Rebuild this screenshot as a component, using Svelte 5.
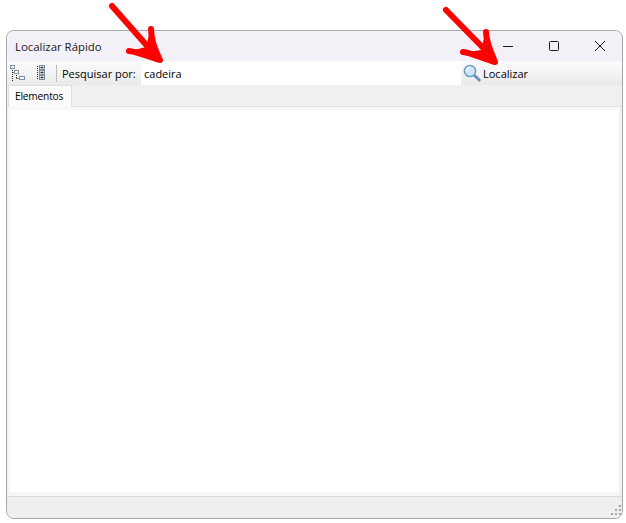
<script>
	const dots = [[12, 0], [8, 4], [12, 4], [4, 8], [8, 8], [12, 8]];
</script>

<div class="page">
	<div class="window">
		<header class="titlebar">
			<span class="title">Localizar Rápido</span>
			<div class="caption">
				<svg width="12" height="12" viewBox="0 0 12 12"><path d="M1 6.5h10" stroke="#1a1a1a" fill="none" /></svg>
				<svg width="12" height="12" viewBox="0 0 12 12"><rect x="1.5" y="1.5" width="9" height="9" rx="1" stroke="#1a1a1a" fill="none" /></svg>
				<svg width="12" height="12" viewBox="0 0 12 12"><path d="M1 1l10 10M11 1L1 11" stroke="#1a1a1a" fill="none" /></svg>
			</div>
		</header>

		<div class="toolbar">
			<button class="tool" aria-label="Expandir">
				<svg width="16" height="16" viewBox="0 0 16 16">
					<path d="M2.5 3v13M2.5 7.5h3M6.5 8v6M6.5 13.5h3" stroke="#222" stroke-dasharray="1 1" fill="none" />
					<rect x="0.5" y="0.5" width="4" height="3" fill="#fff" stroke="#7d93ad" />
					<rect x="4.5" y="5.5" width="4" height="3" fill="#fff" stroke="#7d93ad" />
					<rect x="9.5" y="11.5" width="5" height="3" fill="#fff" stroke="#7d93ad" />
				</svg>
			</button>
			<button class="tool second" aria-label="Recolher">
				<svg width="9" height="16" viewBox="0 0 9 16">
					<path d="M0.5 1v14" stroke="#222" stroke-dasharray="1 1" fill="none" />
					<rect x="2.5" y="0.5" width="5" height="4" fill="#e8edf3" stroke="#7d8da0" />
					<rect x="2.5" y="5.5" width="5" height="4" fill="#e8edf3" stroke="#7d8da0" />
					<rect x="2.5" y="10.5" width="5" height="4" fill="#e8edf3" stroke="#7d8da0" />
					<path d="M3.5 2.5h3M5 1.5v2M3.5 7.5h3M5 6.5v2M3.5 12.5h3M5 11.5v2" stroke="#333" fill="none" />
				</svg>
			</button>
			<span class="sep"></span>
			<label class="label" for="search">Pesquisar por:</label>
			<input id="search" class="search" value="cadeira" />
			<button class="find">
				<svg width="18" height="18" viewBox="0 0 18 18">
					<path d="M11 11l5.2 5" stroke="#6f8fb5" stroke-width="3" stroke-linecap="round" />
					<circle cx="7" cy="7" r="5.6" fill="#cfe6f8" stroke="#6b9ccb" stroke-width="1.5" />
					<path d="M3.5 7a3.5 3.5 0 0 1 3.5-3.5" stroke="#fff" stroke-width="1.5" fill="none" />
				</svg>
				<span>Localizar</span>
			</button>
		</div>

		<div class="tabs">
			<div class="tab">Elementos</div>
		</div>

		<main class="content"></main>

		<footer class="status">
			<div class="grip">
				{#each dots as [x, y]}
					<i style="left: {x}px; top: {y}px"></i>
				{/each}
			</div>
		</footer>
	</div>

	<svg class="arrows" width="626" height="523" viewBox="0 0 626 523">
		<g fill="none" stroke="#fe0000" stroke-width="6" stroke-linecap="round" stroke-linejoin="round">
			<path d="M112 6L156 56" />
			<path d="M151 29C151 38 155 50 160 60C150 57 138 52 129 51" />
			<path d="M446 10L493 58" />
			<path d="M486 32C486 42 491 52 495 62C484 59 472 53 463 52" />
		</g>
		<g fill="#fe0000">
			<path d="M149 35L160 60L134 50L146 47Z" />
			<path d="M484 38L495 62L469 52L481 50Z" />
		</g>
	</svg>
</div>

<style>
	:global(body) {
		margin: 0;
		background: #fff;
	}

	.page {
		position: relative;
		width: 626px;
		height: 523px;
		padding: 30px 3px 4px 6px;
		box-sizing: border-box;
		font-family: "Open Sans", "Liberation Sans", sans-serif;
		font-size: 11px;
		color: #000;
	}

	.window {
		height: 100%;
		display: flex;
		flex-direction: column;
		box-sizing: border-box;
		background: #f0f0f0;
		border: 1px solid #a8a8a8;
		border-radius: 8px;
		overflow: hidden;
	}

	.titlebar {
		height: 30px;
		flex: none;
		display: flex;
		align-items: center;
		justify-content: space-between;
		padding-left: 8px;
		background: #f3f0f7;
	}

	.title {
		font-size: 11.4px;
		color: #1a1a1a;
	}

	.caption {
		display: flex;
		gap: 34px;
		padding-right: 16px;
	}

	.toolbar {
		height: 24px;
		flex: none;
		display: flex;
		align-items: center;
		background: linear-gradient(#fafafa, #f4f4f4 50%, #e9e9e9);
	}

	.tool {
		border: 0;
		padding: 0;
		background: none;
		display: flex;
		margin-left: 3px;
	}

	.tool.second {
		margin-left: 11px;
	}

	.sep {
		width: 1px;
		height: 17px;
		background: #bcbcbc;
		margin: 0 5px 0 10px;
	}

	.label {
		width: 79px;
		flex: none;
		white-space: nowrap;
	}

	.search {
		width: 320px;
		height: 24px;
		flex: none;
		box-sizing: border-box;
		border: 0;
		padding: 0 3px;
		background: #fff;
		font: inherit;
		color: #000;
		outline: none;
	}

	.find {
		display: flex;
		align-items: center;
		gap: 2px;
		border: 0;
		padding: 0 0 0 2px;
		background: none;
		font: inherit;
		color: #000;
	}

	.tabs {
		height: 22px;
		flex: none;
		display: flex;
		align-items: flex-end;
		box-sizing: border-box;
		padding-left: 1px;
		background: #f0f0f0;
		border-bottom: 1px solid #e0e0e0;
	}

	.tab {
		height: 22px;
		margin-bottom: -1px;
		box-sizing: border-box;
		padding: 3px 6px 0;
		width: 64px;
		background: #fbfbfb;
		border: 1px solid #e0e0e0;
		border-bottom: 0;
		font-size: 10.2px;
		letter-spacing: -0.2px;
		white-space: nowrap;
	}

	.content {
		flex: 1;
		margin: 0 2px 0 1px;
		border: solid #f7f7f7;
		border-width: 3px 2px 4px;
		background: #fff;
	}

	.status {
		height: 22px;
		flex: none;
		position: relative;
		box-sizing: border-box;
		background: #efefef;
		border-top: 1px solid #dcdcdc;
	}

	.grip {
		position: absolute;
		right: 1px;
		bottom: 1px;
		width: 14px;
		height: 12px;
	}

	.grip i {
		position: absolute;
		width: 2px;
		height: 2px;
		background: #a6a6a6;
	}

	.arrows {
		position: absolute;
		inset: 0;
		pointer-events: none;
	}
</style>
